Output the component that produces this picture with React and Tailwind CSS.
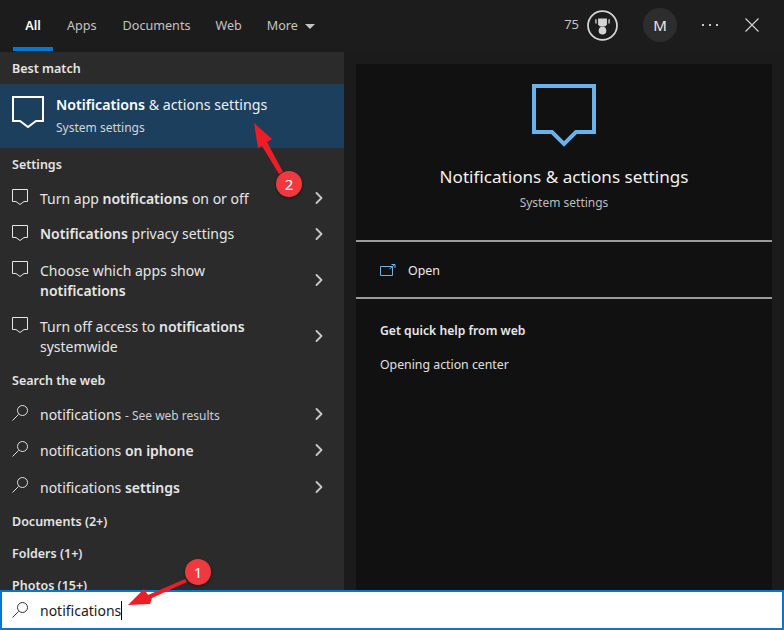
import React from 'react'
import { ChevronRight } from 'lucide-react'

const font = "font-['Noto_Sans',sans-serif]"

function BubbleIcon({ className }) {
  return (
    <svg viewBox="0 0 16 16" className={className} fill="none" stroke="currentColor" strokeWidth="1">
      <path d="M0.500 0.500H15.500V12.500H12L8 15.500L4 12.500H0.500Z" />
    </svg>
  )
}

function SearchIcon({ className = 'text-[#e0e0e0]' }) {
  return (
    <svg viewBox="0 0 16 16" className={`h-4 w-4 ${className}`} fill="none" stroke="currentColor" strokeWidth="1">
      <circle cx="10.500" cy="5.500" r="5" />
      <path d="M6.500 9.500L0.500 15.500" />
    </svg>
  )
}

function SectionLabel({ children }) {
  return <div className="flex h-8 items-center pl-3 pt-[2px] text-[12.5px] font-semibold text-[#e4e4e4]">{children}</div>
}

function ResultRow({ icon, children, height = 'h-9', textClass = 'pt-[2px]' }) {
  return (
    <div className={`flex ${height} items-center pl-3 pr-[15px] text-[14px] leading-5 text-[#e6e6e6]`}>
      <div className="flex h-full w-7 shrink-0 items-start pt-[9px]">{icon}</div>
      <div className={`min-w-0 flex-1 ${textClass}`}>{children}</div>
      <ChevronRight className="h-5 w-5 shrink-0 text-[#c8c8c8]" strokeWidth={2.2} />
    </div>
  )
}

function Badge({ n, className }) {
  return (
    <div className={`absolute flex h-[26px] w-[26px] items-center justify-center rounded-full bg-[#ee3a3f] text-[15px] text-white shadow-[0_1px_3px_rgba(0,0,0,0.5)] ${className}`}>
      {n}
    </div>
  )
}

export default function App() {
  const bubble = <BubbleIcon className="h-4 w-4 text-[#e6e6e6]" />
  return (
    <div className={`relative flex h-[630px] w-[784px] flex-col overflow-hidden bg-[#1b1b1b] ${font}`}>
      <header className="flex h-[52px] shrink-0 items-center bg-[#1c1c1c] text-[12.600px] text-[#c4c4c4]">
        <div className="flex h-full items-center pl-[13px]">
          <div className="relative flex h-full w-10 items-center justify-center font-semibold text-white">
            All
            <div className="absolute bottom-px left-0 h-1 w-10 bg-[#0078d4]" />
          </div>
          <span className="ml-[14px]">Apps</span>
          <span className="ml-[26px]">Documents</span>
          <span className="ml-[25px]">Web</span>
          <span className="ml-[25px]">More</span>
          <span className="ml-[7px] h-0 w-0 border-x-[5px] border-t-[5px] border-x-transparent border-t-[#c4c4c4]" />
        </div>
        <div className="ml-auto flex items-center pb-[2px]">
          <span className="text-[13px]">75</span>
          <svg viewBox="0 0 30 30" className="ml-2 h-[31px] w-[31px] text-[#d4d4d4]" fill="currentColor">
            <circle cx="15" cy="15" r="14" fill="none" stroke="currentColor" strokeWidth="1.700" />
            <path d="M10.700 8.300H19.300V14L17.500 16H12.500L10.700 14Z" />
            <path d="M8 9H9.300V13H8ZM20.700 9H22V13H20.700Z" />
            <circle cx="15" cy="20" r="3.700" />
          </svg>
          <div className="ml-[25px] flex h-[34px] w-[34px] items-center justify-center rounded-full bg-[#2d2d2d] text-[15px] text-[#e8e8e8]">M</div>
          <div className="ml-[25px] flex w-4 justify-between">
            <span className="h-[2px] w-[2px] bg-[#c8c8c8]" />
            <span className="h-[2px] w-[2px] bg-[#c8c8c8]" />
            <span className="h-[2px] w-[2px] bg-[#c8c8c8]" />
          </div>
          <svg viewBox="0 0 14 14" className="ml-[27px] mr-[25px] h-[14px] w-[14px] text-[#d0d0d0]" fill="none" stroke="currentColor" strokeWidth="1.200">
            <path d="M0.500 0.500L13.500 13.500M13.500 0.500L0.500 13.500" />
          </svg>
        </div>
      </header>

      <div className="flex min-h-0 flex-1">
        <aside className="w-[344px] shrink-0 overflow-hidden bg-[#2b2b2b]">
          <SectionLabel>Best match</SectionLabel>
          <div className="flex h-16 bg-[#1c3f5e] pl-3">
            <BubbleIcon className="mt-3 h-8 w-8 text-white" />
            <div className="ml-3 mt-[11px]">
              <div className="text-[14.200px] leading-5 text-[#f0f0f0]">
                <span className="font-semibold text-white">Notifications</span> &amp; actions settings
              </div>
              <div className="mt-[5px] text-[12px] leading-4 text-[#cfd6dc]">System settings</div>
            </div>
          </div>
          <SectionLabel>Settings</SectionLabel>
          <ResultRow icon={bubble}>Turn app <b className="font-semibold">notifications</b> on or off</ResultRow>
          <ResultRow icon={bubble} textClass="pt-0"><b className="font-semibold">Notifications</b> privacy settings</ResultRow>
          <ResultRow icon={bubble} height="h-14">Choose which apps show<br /><b className="font-semibold">notifications</b></ResultRow>
          <ResultRow icon={bubble} height="h-14">Turn off access to <b className="font-semibold">notifications</b><br />systemwide</ResultRow>
          <SectionLabel>Search the web</SectionLabel>
          <ResultRow icon={<SearchIcon />}>notifications <span className="text-[12px] text-[#cfcfcf]">- See web results</span></ResultRow>
          <ResultRow icon={<SearchIcon />}>notifications <b className="font-semibold">on iphone</b></ResultRow>
          <ResultRow icon={<SearchIcon />} height="h-[37px]">notifications <b className="font-semibold">settings</b></ResultRow>
          <SectionLabel>Documents (2+)</SectionLabel>
          <SectionLabel>Folders (1+)</SectionLabel>
          <SectionLabel>Photos (15+)</SectionLabel>
        </aside>

        <main className="flex min-w-0 flex-1 px-3 pt-3">
          <div className="flex-1 bg-[#111111]">
            <div className="flex h-[178px] flex-col items-center border-b-2 border-[#9a9a9a] pt-5">
              <svg viewBox="0 0 64 64" className="h-16 w-16 text-[#6cb2ea]" fill="none" stroke="currentColor" strokeWidth="4">
                <path d="M2 2H62V48H44L32 60L20 48H2Z" />
              </svg>
              <div className="mt-[17px] text-[17.100px] leading-6 text-[#f0f0f0]">Notifications &amp; actions settings</div>
              <div className="mt-[4px] text-[12px] leading-5 text-[#bdbdbd]">System settings</div>
            </div>
            <div className="flex h-[57px] items-center border-b-2 border-[#9a9a9a] pl-6 pt-[3px] text-[12.400px] text-[#ececec]">
              <svg viewBox="0 0 16 12" className="-mt-[3px] h-3 w-4 text-[#6cb2ea]" fill="none" stroke="currentColor" strokeWidth="1">
                <path d="M0.500 2.500H12.500V11.500H0.500Z" />
                <path d="M9.500 5L14.500 0.800M11.500 0.500H15V4" />
              </svg>
              <span className="ml-3">Open</span>
            </div>
            <div className="pl-6 pt-[22px]">
              <div className="text-[12.200px] font-semibold leading-5 text-[#e8e8e8]">Get quick help from web</div>
              <div className="mt-[14px] text-[12.300px] leading-5 text-[#e0e0e0]">Opening action center</div>
            </div>
          </div>
        </main>
      </div>

      <div className="z-10 flex h-10 shrink-0 items-center border-2 border-[#0078d4] bg-white pl-[10px]">
        <SearchIcon className="text-[#333333]" />
        <span className="ml-[12px] text-[14px] text-[#1a1a1a]">notifications</span>
        <span className="h-[19px] w-px bg-black" />
      </div>

      <svg viewBox="0 0 784 630" className="pointer-events-none absolute inset-0 z-20 h-full w-full" fill="#ee1c25">
        <path d="M254 123L272 139L267 142L283 172L279 174L262 146L258 148Z" />
        <path d="M128 605L144 589L148 595L185 579L187 582L152 598L150 604Z" />
      </svg>
      <Badge n="2" className="left-[276px] top-[171px] z-30" />
      <Badge n="1" className="left-[185px] top-[559px] z-30" />
    </div>
  )
}
